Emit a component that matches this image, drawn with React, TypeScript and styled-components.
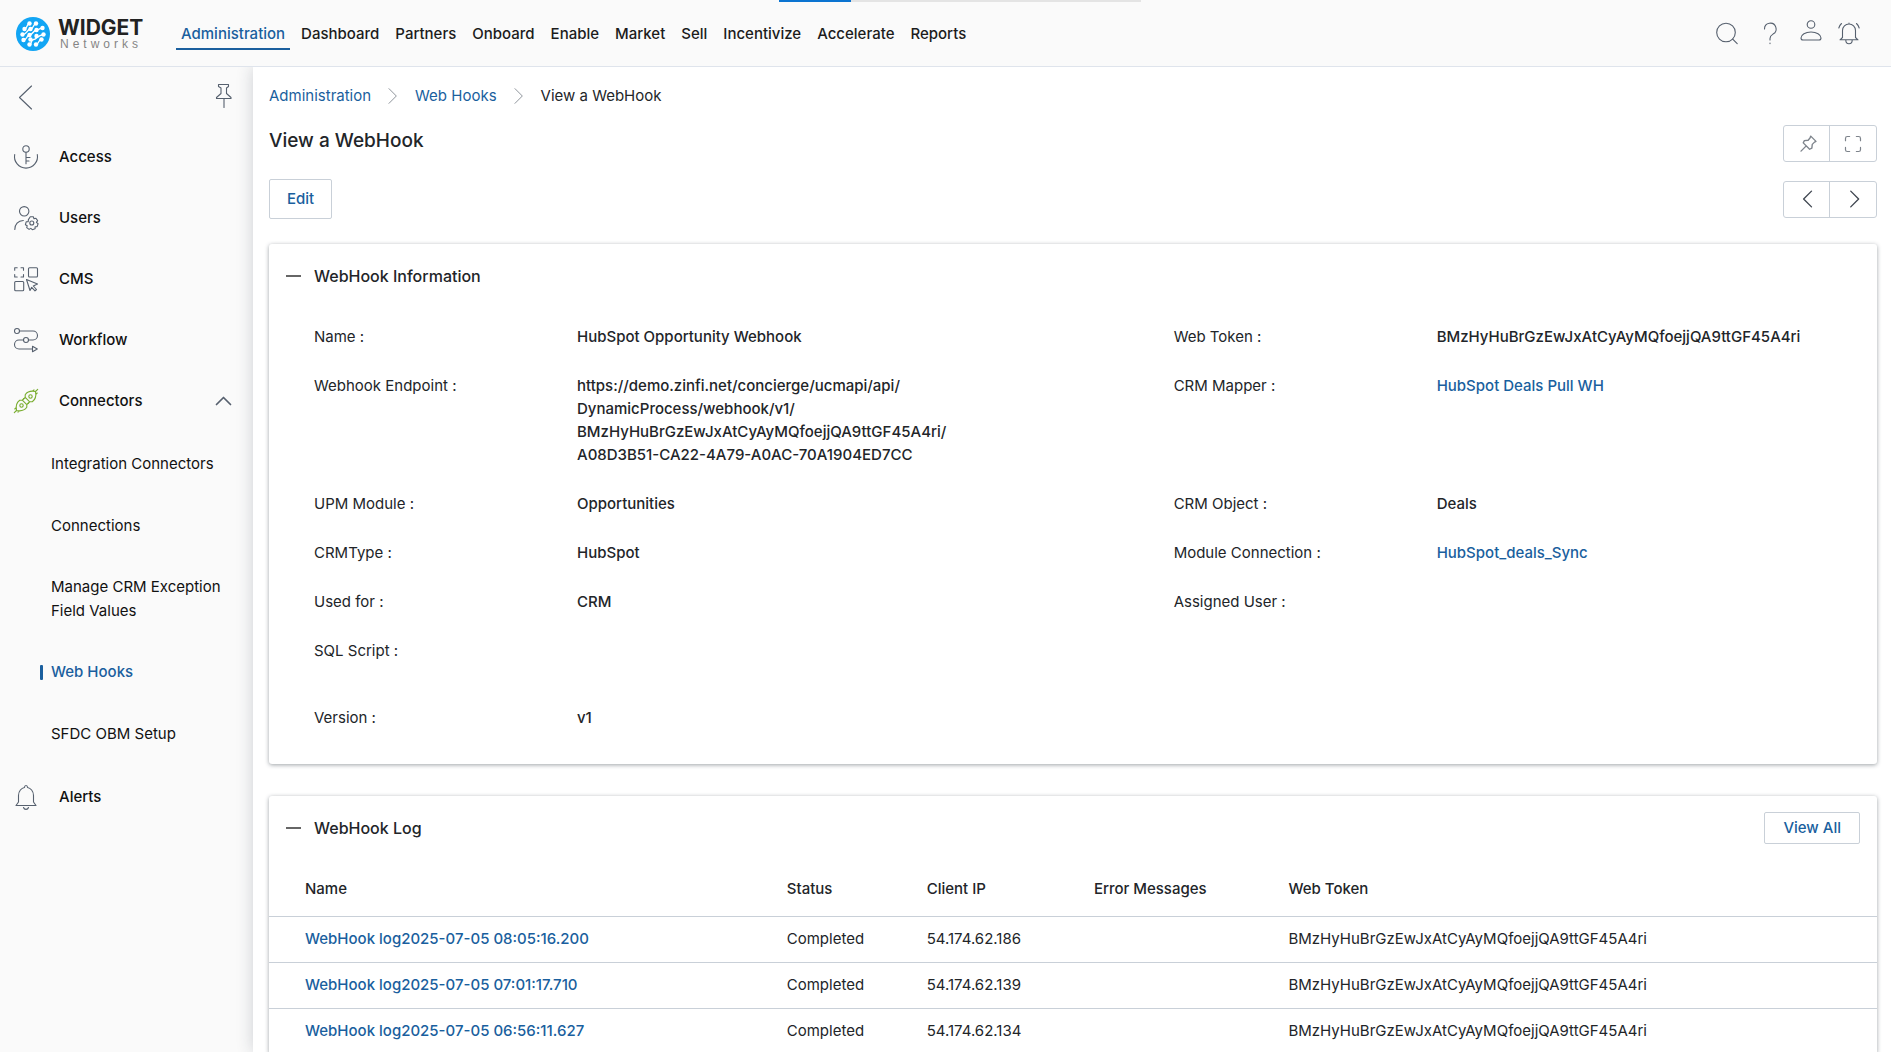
import React from "react";
import styled, { createGlobalStyle } from "styled-components";

const color = {
  link: "#1a5f9e",
  text: "#222529",
  line: "#c9d0d8",
  chrome: "#fafafa",
  icon: "#56606e",
};

const GlobalStyle = createGlobalStyle`
  *, *::before, *::after { box-sizing: border-box; }
  body {
    margin: 0;
    background: #fff;
    color: ${color.text};
    font: 400 15px/24px Inter, "Liberation Sans", sans-serif;
  }
  a { color: inherit; text-decoration: none; }
  ul, ol, dl, dd, h1, h2 { margin: 0; padding: 0; list-style: none; }
  button { font: inherit; color: inherit; background: none; border: 0; padding: 0; cursor: pointer; }
`;

const Page = styled.div`
  display: flex;
  flex-direction: column;
  height: 100vh;
  overflow: hidden;
`;

const LoadingTrack = styled.div`
  position: absolute;
  z-index: 2;
  top: 0;
  left: 41.2%;
  width: 362px;
  height: 2px;
  background: #e4e4e4;
`;

const LoadingBar = styled.div`
  width: 20%;
  height: 100%;
  background: #0b74d1;
`;

const Header = styled.header`
  position: relative;
  z-index: 1;
  flex: none;
  display: flex;
  align-items: center;
  height: 67px;
  padding: 0 30px 0 16px;
  background: ${color.chrome};
  border-bottom: 1px solid #dfe4ec;
`;

const Brand = styled.a`
  display: flex;
  align-items: center;
  gap: 8px;
  width: 160px;
  padding-top: 2px;
`;

const BrandText = styled.span`
  display: flex;
  flex-direction: column;
  padding-top: 2px;
`;

const BrandName = styled.span`
  font-size: 21px;
  font-weight: 700;
  line-height: 18px;
  color: #222;
`;

const BrandSub = styled.span`
  padding-left: 2px;
  font: 400 12px/14px "Liberation Sans", Arial, sans-serif;
  letter-spacing: 4px;
  color: #858585;
`;

const TopNav = styled.nav`
  display: flex;
  gap: 6px;
  flex: 1;
`;

const TopLink = styled.a<{ $active?: boolean }>`
  padding: 6px 5px 2px;
  font-weight: 500;
  color: ${(p) => (p.$active ? color.link : "#1c1c1c")};
  border-bottom: 2px solid ${(p) => (p.$active ? color.link : "transparent")};
`;

const Tools = styled.div`
  display: flex;
  align-items: center;
  gap: 16px;
  color: ${color.icon};
`;

const IconButton = styled.button`
  display: flex;
  align-items: center;
  justify-content: center;
  width: 24px;
  height: 24px;
`;

const Body = styled.div`
  flex: 1;
  display: flex;
  min-height: 0;
`;

const Sidebar = styled.aside`
  flex: none;
  width: 253px;
  padding: 17px 17px 0 14px;
  background: ${color.chrome};
  color: #111;
`;

const SidebarTop = styled.div`
  display: flex;
  justify-content: space-between;
  height: 42px;
  color: ${color.icon};
`;

const SideLink = styled.a`
  display: flex;
  align-items: center;
  gap: 21px;
  height: 61px;
  font-weight: 500;
`;

const SideIcon = styled.span<{ $green?: boolean }>`
  display: flex;
  color: ${(p) => (p.$green ? "#79ad2f" : color.icon)};
`;

const SideText = styled.span`
  flex: 1;
`;

const SubList = styled.ul`
  padding: 2px 0 1px 26px;
`;

const SubItem = styled.li`
  display: flex;
  align-items: center;
  min-height: 62px;
  padding: 18px 0;
`;

const SubLink = styled.a<{ $active?: boolean }>`
  position: relative;
  padding: 0 11px;
  color: ${(p) => (p.$active ? color.link : "inherit")};
  font-weight: ${(p) => (p.$active ? 500 : 400)};

  &::before {
    content: "";
    position: absolute;
    top: 5px;
    left: 0;
    width: 3px;
    height: 15px;
    border-radius: 1px;
    background: ${(p) => (p.$active ? color.link : "transparent")};
  }
`;

const Main = styled.main`
  flex: 1;
  min-width: 0;
  padding: 17px 14px 0 16px;
  background: #fff;
  box-shadow: 0 0 16px rgba(30, 40, 60, 0.2);
`;

const Crumbs = styled.ol`
  display: flex;
  align-items: center;
  gap: 14px;
`;

const Crumb = styled.li`
  display: flex;
  align-items: center;
  gap: 14px;

  a { color: ${color.link}; }
  svg { color: #8f959c; }
`;

const TitleRow = styled.div`
  display: flex;
  align-items: flex-start;
  justify-content: space-between;
  padding-top: 17px;
`;

const PageTitle = styled.h1`
  padding-top: 4px;
  font-size: 19px;
  font-weight: 500;
  line-height: 24px;
`;

const ActionRow = styled.div`
  display: flex;
  align-items: center;
  justify-content: space-between;
  padding: 17px 0 25px;
`;

const Button = styled.button<{ $compact?: boolean }>`
  height: ${(p) => (p.$compact ? 32 : 40)}px;
  padding: 0 ${(p) => (p.$compact ? 18 : 17)}px;
  border: 1px solid ${color.line};
  border-radius: 2px;
  background: #fff;
  color: ${color.link};
  font-weight: 500;
`;

const ButtonGroup = styled.div`
  display: flex;
  border: 1px solid ${color.line};
  border-radius: 3px;
`;

const GroupButton = styled.button<{ $muted?: boolean }>`
  display: flex;
  align-items: center;
  justify-content: center;
  width: 45px;
  height: 35px;
  color: ${(p) => (p.$muted ? "#7d838b" : "#3f4650")};

  & + & {
    width: 47px;
    border-left: 1px solid ${color.line};
  }
`;

const Card = styled.section`
  margin-bottom: 32px;
  border-radius: 3px;
  background: #fff;
  box-shadow: 0 1px 4px rgba(40, 50, 60, 0.45);
`;

const CardHeader = styled.div`
  display: flex;
  align-items: center;
  justify-content: space-between;
  height: 64px;
  padding: 0 17px;
`;

const CardToggle = styled.button`
  display: flex;
  align-items: center;
  gap: 13px;
  color: #666;
`;

const CardTitle = styled.h2`
  font-size: 16px;
  font-weight: 500;
  line-height: 24px;
  color: ${color.text};
`;

const Details = styled.dl`
  display: grid;
  grid-template-columns: 55fr 45fr;
  padding: 4px 0 22px 45px;
`;

const Field = styled.div<{ $tall?: boolean }>`
  display: flex;
  min-height: ${(p) => (p.$tall ? 67 : 49)}px;
  padding: 13px 0;
  line-height: 23px;
`;

const Label = styled.dt`
  flex: none;
  width: 263px;
`;

const Value = styled.dd`
  max-width: 380px;
  font-weight: 500;

  a { color: ${color.link}; }
`;

const Table = styled.table`
  width: 100%;
  table-layout: fixed;
  border-collapse: collapse;
  text-align: left;
`;

const HeadCell = styled.th<{ $width?: string }>`
  width: ${(p) => p.$width ?? "auto"};
  height: 56px;
  padding: 2px 0 0;
  font-weight: 500;

  &:first-child { padding-left: 36px; }
`;

const Cell = styled.td`
  height: 46px;
  padding: 0;
  border-top: 1px solid ${color.line};

  &:first-child { padding-left: 36px; }
  a { color: ${color.link}; font-weight: 500; }
`;

type IconProps = { size?: number; width?: number; children: React.ReactNode };

const Icon = ({ size = 24, width = 1.1, children }: IconProps) => (
  <svg
    width={size}
    height={size}
    viewBox="0 0 24 24"
    fill="none"
    stroke="currentColor"
    strokeWidth={width}
    strokeLinecap="round"
    strokeLinejoin="round"
    overflow="visible"
    aria-hidden="true"
  >
    {children}
  </svg>
);

const LogoMark = () => (
  <svg width="34" height="34" viewBox="0 0 34 34" aria-hidden="true">
    <circle cx="17" cy="17" r="17" fill="#12a5f4" />
    <g fill="none" stroke="#fff" strokeWidth="1.3">
      <path d="M8.500 12c3 0 2-5.500 5-5.500M6.500 17.500c5 0 4-5 8-5.500s2.500-5.500 5.500-5.500M7.500 23c4 0 2.500-4.500 6-5s3.500-4.500 7-5 3-2 6-2M13.500 27.500c3 0 .5-4.500 4-5s3.500-4 10-5M20 27.500c3 0 2-5 5.500-5" />
    </g>
    <g fill="#fff">
      {[
        [13.5, 6.5], [20, 6.5], [8.5, 12], [14.5, 12], [20.5, 13], [26.5, 11],
        [6.5, 17.5], [13.5, 18], [20.5, 19], [27.5, 17.5], [7.5, 23],
        [14.5, 22.5], [13.5, 27.5], [20, 27.5], [25.5, 22.5],
      ].map(([x, y]) => (
        <circle key={`${x}-${y}`} cx={x} cy={y} r="2.2" />
      ))}
    </g>
  </svg>
);

const icons = {
  search: (
    <Icon>
      <circle cx="9" cy="11.500" r="9.300" />
      <path d="M15.700 18.200l4.500 4.500" />
    </Icon>
  ),
  help: (
    <Icon>
      <path d="M7.500 8a5.800 5.800 0 1 1 8.500 5.100c-2 1.200-3 2-3 4.400v1.500M13 22v.6" />
    </Icon>
  ),
  user: (
    <Icon>
      <circle cx="14" cy="3.500" r="3.800" />
      <path d="M4 17c0-3.500 4.500-6 10-6s10 2.500 10 6c0 1.300-.6 2-2 2H6c-1.400 0-2-.7-2-2z" />
    </Icon>
  ),
  ringing: (
    <Icon>
      <path d="M5.500 16.500V9.500a6.500 6.500 0 0 1 13 0v7l2.500 2.300H3zM8.800 19a3.200 3.800 0 0 0 6.400 0M12 3V2M4.500 2.500A9 9 0 0 0 1.800 7M19.500 2.500A9 9 0 0 1 22.200 7" />
    </Icon>
  ),
  back: (
    <Icon>
      <path d="M17.500 2L5.500 13.500 17.500 25" />
    </Icon>
  ),
  pin: (
    <Icon>
      <path d="M6.500 .5h10v2l-2 1.500v5.500l4.500 4v1H4.500v-1l4.500-4V4L6.500 2.500zM12 14.500v9" />
    </Icon>
  ),
  access: (
    <Icon>
      <circle cx="12" cy="4" r="3.200" />
      <path d="M12 7.200v11.500M12 12.500h4M12 16h3M.7 9.500a11.500 11.500 0 1 0 22.600 0" />
    </Icon>
  ),
  users: (
    <Icon>
      <circle cx="10.200" cy="5.300" r="4.700" />
      <path d="M.8 23.500c0-5 3.200-8.800 8.500-9" />
      <circle cx="17.800" cy="17" r="2" />
      <path d="M16.300 10.800h3l.7 1.900 1.900-.5 1.700 2.400-1.200 1.800 1.700 1.300-1 2.900-2 .1v2l-2.800 1-1.500-1.300-1.700 1-2.400-1.800.5-1.900-1.800-1 .8-2.900 2-.2.2-2z" />
    </Icon>
  ),
  cms: (
    <Icon>
      <path d="M.7 3.200V.7h2.500M7 .7h2.500v2.500M9.500 7.500V10H7M3.200 10H.7V7.500" />
      <rect x="14.500" y=".7" width="9" height="9.300" rx="1" />
      <rect x=".7" y="14.500" width="9" height="9.300" rx="1" />
      <path d="M12.500 12.500l11 4.500-4.200 2 3.200 3.500-1.500 1.300-3.300-3.500-1.700 3.200z" />
    </Icon>
  ),
  workflow: (
    <Icon>
      <circle cx="3" cy="3" r="2.500" />
      <circle cx="12" cy="12" r="2.500" />
      <path d="M5.500 3H19a4.500 4.500 0 0 1 0 9h-4.500M9.500 12H5a4.500 4.500 0 0 0 0 9h13.500M18.500 18.300l4.800 2.700-4.800 2.700z" />
    </Icon>
  ),
  connectors: (
    <Icon>
      {[0, 180].map((turn) => (
        <g key={turn} transform={`rotate(${turn} 12 12)`}>
          <path d="M21.500 2.500c-4.500-.9-8 0-10.300 3.200v2.600l4.500 4.500h2.600c3.200-2.300 4.100-5.800 3.200-10.300zM21.500 2.500L23.700.3M19 1.800l1-1M22.200 5l1-1M11.200 8.300L9.500 10M15.700 12.800L14 14.500" />
          <circle cx="16.500" cy="7.500" r="1.700" />
        </g>
      ))}
    </Icon>
  ),
  alerts: (
    <Icon>
      <path d="M4.500 17V10.500C4.500 6 7.500 3 10.500 2.500 10.500 1 11 .5 12 .5s1.500.5 1.500 2c3 .5 6 3.500 6 8V17l2.500 3.500H2zM9.500 22.500a2.600 2.600 0 0 0 5 0" />
    </Icon>
  ),
  chevronUp: (
    <Icon width={1.7}>
      <path d="M4.500 15.500L11.500 8.500l7 7" />
    </Icon>
  ),
  crumb: (
    <Icon size={16} width={1.5}>
      <path d="M6 1l11 11L6 23" />
    </Icon>
  ),
  tack: (
    <Icon size={18} width={1.8}>
      <path d="M17 1.500l7 7-2 1-3 3-.5 5-3 1.500-8.500-8.500L8.500 7.500l5-.5 2.500-3zM11 14.500L4 21.500" />
    </Icon>
  ),
  expand: (
    <Icon size={18} width={1.6}>
      <path d="M2 7.500V4.500A2.500 2.500 0 0 1 4.500 2h3M16.500 2h3A2.500 2.500 0 0 1 22 4.500v3M22 16.500v3a2.500 2.500 0 0 1-2.500 2.500h-3M7.500 22h-3A2.500 2.500 0 0 1 2 19.500v-3" />
    </Icon>
  ),
  previous: (
    <Icon size={18} width={1.8}>
      <path d="M18 1.500L7.500 12 18 22.500" />
    </Icon>
  ),
  next: (
    <Icon size={18} width={1.8}>
      <path d="M9 1.500L19.500 12 9 22.500" />
    </Icon>
  ),
  minus: (
    <svg width="15" height="2" viewBox="0 0 15 2" aria-hidden="true">
      <rect width="15" height="2" fill="currentColor" />
    </svg>
  ),
};

const topLinks = [
  "Administration", "Dashboard", "Partners", "Onboard", "Enable",
  "Market", "Sell", "Incentivize", "Accelerate", "Reports",
];

const sideLinks = [
  { text: "Access", icon: icons.access },
  { text: "Users", icon: icons.users },
  { text: "CMS", icon: icons.cms },
  { text: "Workflow", icon: icons.workflow },
];

const subLinks = [
  "Integration Connectors", "Connections", "Manage CRM Exception Field Values",
  "Web Hooks", "SFDC OBM Setup",
];

const token = "BMzHyHuBrGzEwJxAtCyAyMQfoejjQA9ttGF45A4ri";

type FieldData = { label: string; value?: React.ReactNode; tall?: boolean } | null;

const fields: FieldData[] = [
  { label: "Name", value: "HubSpot Opportunity Webhook" },
  { label: "Web Token", value: token },
  {
    label: "Webhook Endpoint",
    value: (
      <>
        https://demo.zinfi.net/concierge/ucmapi/api/
        <wbr />
        DynamicProcess/webhook/v1/
        <wbr />
        {token}/<wbr />
        A08D3B51-CA22-4A79-A0AC-70A1904ED7CC
      </>
    ),
  },
  { label: "CRM Mapper", value: <a href="#mapper">HubSpot Deals Pull WH</a> },
  { label: "UPM Module", value: "Opportunities" },
  { label: "CRM Object", value: "Deals" },
  { label: "CRMType", value: "HubSpot" },
  { label: "Module Connection", value: <a href="#connection">HubSpot_deals_Sync</a> },
  { label: "Used for", value: "CRM" },
  { label: "Assigned User" },
  { label: "SQL Script", tall: true },
  null,
  { label: "Version", value: "v1" },
];

const logs = [
  { name: "WebHook log2025-07-05 08:05:16.200", ip: "54.174.62.186" },
  { name: "WebHook log2025-07-05 07:01:17.710", ip: "54.174.62.139" },
  { name: "WebHook log2025-07-05 06:56:11.627", ip: "54.174.62.134" },
];

export default function App() {
  return (
    <Page>
      <GlobalStyle />
      <LoadingTrack>
        <LoadingBar />
      </LoadingTrack>
      <Header>
        <Brand href="#home">
          <LogoMark />
          <BrandText>
            <BrandName>WIDGET</BrandName>
            <BrandSub>Networks</BrandSub>
          </BrandText>
        </Brand>
        <TopNav>
          {topLinks.map((text, i) => (
            <TopLink key={text} href={`#${text}`} $active={i === 0}>
              {text}
            </TopLink>
          ))}
        </TopNav>
        <Tools>
          <IconButton aria-label="Search">{icons.search}</IconButton>
          <IconButton aria-label="Help">{icons.help}</IconButton>
          <IconButton aria-label="Account">{icons.user}</IconButton>
          <IconButton aria-label="Notifications">{icons.ringing}</IconButton>
        </Tools>
      </Header>
      <Body>
        <Sidebar>
          <SidebarTop>
            <IconButton aria-label="Back">{icons.back}</IconButton>
            <IconButton aria-label="Pin menu">{icons.pin}</IconButton>
          </SidebarTop>
          <nav>
            {sideLinks.map((item) => (
              <SideLink key={item.text} href={`#${item.text}`}>
                <SideIcon>{item.icon}</SideIcon>
                <SideText>{item.text}</SideText>
              </SideLink>
            ))}
            <SideLink href="#Connectors">
              <SideIcon $green>{icons.connectors}</SideIcon>
              <SideText>Connectors</SideText>
              <SideIcon>{icons.chevronUp}</SideIcon>
            </SideLink>
            <SubList>
              {subLinks.map((text) => (
                <SubItem key={text}>
                  <SubLink href="#sub" $active={text === "Web Hooks"}>
                    {text}
                  </SubLink>
                </SubItem>
              ))}
            </SubList>
            <SideLink href="#Alerts">
              <SideIcon>{icons.alerts}</SideIcon>
              <SideText>Alerts</SideText>
            </SideLink>
          </nav>
        </Sidebar>
        <Main>
          <Crumbs>
            <Crumb>
              <a href="#Administration">Administration</a>
              {icons.crumb}
            </Crumb>
            <Crumb>
              <a href="#hooks">Web Hooks</a>
              {icons.crumb}
            </Crumb>
            <Crumb>View a WebHook</Crumb>
          </Crumbs>
          <TitleRow>
            <PageTitle>View a WebHook</PageTitle>
            <ButtonGroup>
              <GroupButton $muted aria-label="Pin page">{icons.tack}</GroupButton>
              <GroupButton $muted aria-label="Full screen">{icons.expand}</GroupButton>
            </ButtonGroup>
          </TitleRow>
          <ActionRow>
            <Button>Edit</Button>
            <ButtonGroup>
              <GroupButton aria-label="Previous">{icons.previous}</GroupButton>
              <GroupButton aria-label="Next">{icons.next}</GroupButton>
            </ButtonGroup>
          </ActionRow>
          <Card>
            <CardHeader>
              <CardToggle aria-expanded="true">
                {icons.minus}
                <CardTitle>WebHook Information</CardTitle>
              </CardToggle>
            </CardHeader>
            <Details>
              {fields.map((field, i) =>
                field ? (
                  <Field key={field.label} $tall={field.tall}>
                    <Label>{field.label} :</Label>
                    <Value>{field.value}</Value>
                  </Field>
                ) : (
                  <div key={i} />
                ),
              )}
            </Details>
          </Card>
          <Card>
            <CardHeader>
              <CardToggle aria-expanded="true">
                {icons.minus}
                <CardTitle>WebHook Log</CardTitle>
              </CardToggle>
              <Button $compact>View All</Button>
            </CardHeader>
            <Table>
              <thead>
                <tr>
                  <HeadCell $width="32.2%">Name</HeadCell>
                  <HeadCell $width="8.7%">Status</HeadCell>
                  <HeadCell $width="10.4%">Client IP</HeadCell>
                  <HeadCell $width="12.1%">Error Messages</HeadCell>
                  <HeadCell>Web Token</HeadCell>
                </tr>
              </thead>
              <tbody>
                {logs.map((log) => (
                  <tr key={log.name}>
                    <Cell>
                      <a href="#log">{log.name}</a>
                    </Cell>
                    <Cell>Completed</Cell>
                    <Cell>{log.ip}</Cell>
                    <Cell />
                    <Cell>{token}</Cell>
                  </tr>
                ))}
              </tbody>
            </Table>
          </Card>
        </Main>
      </Body>
    </Page>
  );
}
